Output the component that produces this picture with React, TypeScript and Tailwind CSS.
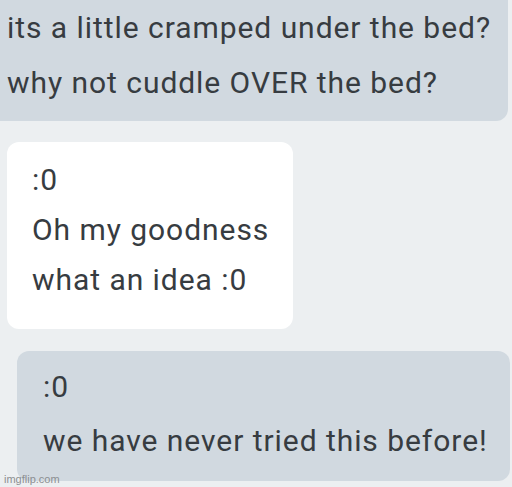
export default function App() {
  return (
    <div className="relative h-[487px] w-[512px] overflow-hidden bg-[#eceff1] font-['Roboto',sans-serif] text-[30px] tracking-[0.95px] text-[#373c41]">
      <div className="flex flex-col">
        <div className="w-[508px] rounded-br-[12px] bg-[#d1d9e0] pl-[7px] pb-[11px] leading-[55px]">
          <p>its a little cramped under the bed?</p>
          <p>why not cuddle OVER the bed?</p>
        </div>

        <div className="ml-[7px] mt-[21px] w-[286px] rounded-[12px] bg-white pl-[25px] pt-[13px] pb-[24px] leading-[50px]">
          <p>:0</p>
          <p>Oh my goodness</p>
          <p>what an idea :0</p>
        </div>

        <div className="ml-[17px] mt-[22px] w-[493px] rounded-[12px] bg-[#d1d9e0] pl-[26px] pt-[9px] pb-[13px] leading-[54px]">
          <p>:0</p>
          <p>we have never tried this before!</p>
        </div>
      </div>

      <span className="absolute bottom-[1px] left-[4px] font-['Liberation_Sans',sans-serif] text-[11px] leading-[14px] tracking-normal text-[#8c8f92]">
        imgflip.com
      </span>
    </div>
  );
}
